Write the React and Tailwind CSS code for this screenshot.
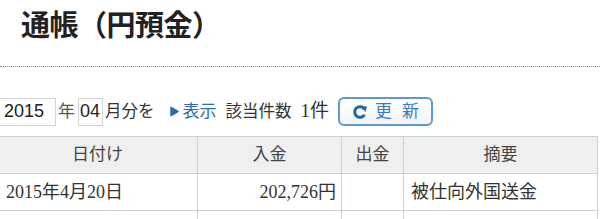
export default function App() {
  return (
    <div className="w-[600px] h-[219px] overflow-hidden bg-white text-[#333] font-['Liberation_Sans','Noto_Sans_CJK_JP',sans-serif]">
      <h1 className="pl-[21px] pt-[6px] h-[66px] text-[29px] leading-[40px] font-bold text-[#222] tracking-[-0.5px]">
        通帳（円預金）
      </h1>
      <div className="border-t border-dotted border-[#888]" />
      <div className="flex items-center h-[29px] mt-[30px] text-[16px] ml-[-1px]">
        <div className="w-[57px] h-[28px] border border-[#d4d4d4] flex items-center pl-[4px] text-[18px] text-[#222]">2015</div>
        <span className="ml-[2px] text-[#555] text-[17px]">年</span>
        <div className="ml-[3px] w-[25px] h-[28px] border border-[#d4d4d4] flex items-center pl-[1px] text-[18px] text-[#222]">04</div>
        <span className="ml-[2px] text-[#333] text-[16.5px]">月分を</span>
        <span className="ml-[15px] flex items-center text-[#2a6da8] text-[17px]">
          <svg width="9" height="11" viewBox="0 0 9 11" className="mr-[4px]">
            <path d="M1 1.5 L8 5.5 L1 9.5 Z" fill="#2a6da8" stroke="#2a6da8" strokeWidth="1.5" strokeLinejoin="round" />
          </svg>
          表示
        </span>
        <span className="ml-[9px] text-[#333] text-[16.5px]">該当件数</span>
        <span className="ml-[9px] text-[#333] text-[19px] font-['Liberation_Serif','Noto_Sans_CJK_JP',serif]">1件</span>
        <button className="ml-[9px] w-[95px] h-[29px] rounded-[6px] border-2 border-[#5e9ad0] bg-gradient-to-b from-white to-[#f2f6fa] flex items-center pl-[12px]">
          <svg width="16" height="16" viewBox="0 0 16 16">
            <path d="M12.5 5.2 A5.3 5.3 0 1 0 12.5 10.8" fill="none" stroke="#1f66a6" strokeWidth="3" />
            <path d="M9.5 2.5 L15 2.5 L13.5 8 Z" fill="#1f66a6" />
          </svg>
          <span className="ml-[7px] text-[17px] tracking-[10px] text-[#3a7ab8]">更新</span>
        </button>
      </div>
      <table className="mt-[10px] ml-[-3px] w-[600px] border-collapse table-fixed font-['Liberation_Serif','Noto_Sans_CJK_JP',serif] text-[#333]">
        <colgroup>
          <col className="w-[200px]" />
          <col className="w-[144px]" />
          <col className="w-[62px]" />
          <col className="w-[194px]" />
        </colgroup>
        <thead>
          <tr className="bg-[#efefef] h-[37px] text-[17px]">
            <th className="border border-[#cfcfcf] font-normal text-[#444]">日付け</th>
            <th className="border border-[#cfcfcf] font-normal text-[#444]">入金</th>
            <th className="border border-[#cfcfcf] font-normal text-[#444]">出金</th>
            <th className="border border-[#cfcfcf] font-normal text-[#444]">摘要</th>
          </tr>
        </thead>
        <tbody className="text-[18px]">
          <tr className="h-[37px]">
            <td className="border border-[#cfcfcf] pl-[8px]">2015年4月20日</td>
            <td className="border border-[#cfcfcf] pr-[5px] text-right">202,726円</td>
            <td className="border border-[#cfcfcf]"></td>
            <td className="border border-[#cfcfcf] pl-[7px]">被仕向外国送金</td>
          </tr>
          <tr className="h-[37px]">
            <td className="border border-[#cfcfcf]"></td>
            <td className="border border-[#cfcfcf]"></td>
            <td className="border border-[#cfcfcf]"></td>
            <td className="border border-[#cfcfcf]"></td>
          </tr>
        </tbody>
      </table>
    </div>
  );
}
